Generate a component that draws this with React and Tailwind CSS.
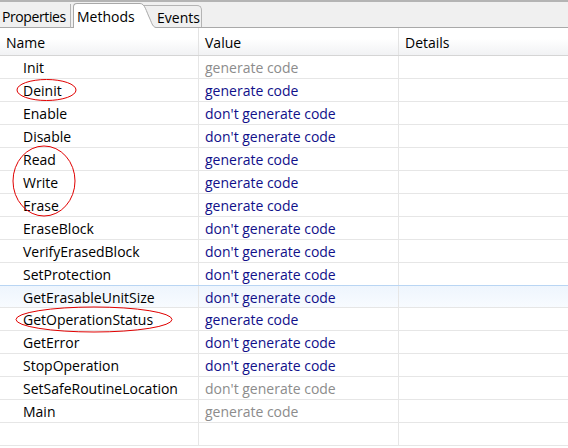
import React from 'react';

const rows = [
  { name: 'Init', value: 'generate code', dim: true },
  { name: 'Deinit', value: 'generate code' },
  { name: 'Enable', value: "don't generate code" },
  { name: 'Disable', value: "don't generate code" },
  { name: 'Read', value: 'generate code' },
  { name: 'Write', value: 'generate code' },
  { name: 'Erase', value: 'generate code' },
  { name: 'EraseBlock', value: "don't generate code" },
  { name: 'VerifyErasedBlock', value: "don't generate code" },
  { name: 'SetProtection', value: "don't generate code" },
  { name: 'GetErasableUnitSize', value: "don't generate code", active: true },
  { name: 'GetOperationStatus', value: 'generate code' },
  { name: 'GetError', value: "don't generate code" },
  { name: 'StopOperation', value: "don't generate code" },
  { name: 'SetSafeRoutineLocation', value: "don't generate code", dim: true },
  { name: 'Main', value: 'generate code', dim: true },
  { name: '', value: '' },
];

const Row = ({ name, value, dim, active }) => (
  <div
    className={
      'flex h-[23px] border-b ' +
      (active
        ? 'border-t border-t-[#b9d5f3] border-b-[#e6e6e6] bg-gradient-to-b from-[#eef5fd] to-[#f8fbff] -mt-px'
        : 'border-[#e6e6e6]')
    }
  >
    <div className="w-[199px] shrink-0 border-r border-[#e6e6e6] pl-[23px] pt-[2px] flex items-center text-black">
      {name}
    </div>
    <div
      className={
        'w-[200px] shrink-0 border-r border-[#e6e6e6] pl-[6px] pt-[2px] flex items-center ' +
        (dim ? 'text-[#8c8c8c]' : 'text-[#10108a]')
      }
    >
      {value}
    </div>
    <div className="flex-1" />
  </div>
);

export default function App() {
  return (
    <div className="relative w-[568px] h-[448px] overflow-hidden bg-white font-['Open_Sans',sans-serif] text-[14px] leading-none">
      {/* tab strip */}
      <div className="h-[28px] bg-[#f0f0f0] border-t-2 border-[#b4b4b4] flex items-end relative">
        <div className="absolute left-0 right-0 bottom-0 h-px bg-[#a9a9a9]" />
        <div className="h-[24px] w-[71px] border-r border-[#b4b4b4] pl-[2px] pt-[2px] flex items-center text-black relative tracking-[-0.4px]">
          Properties
        </div>
        <div className="h-[25px] ml-[2px] flex relative z-10">
          <div className="w-[64px] bg-white border-l border-t border-[#a9a9a9] rounded-tl-[4px] pl-[3px] pt-[2px] flex items-center">
            Methods
          </div>
          <svg width="20" height="25" viewBox="0 0 20 25" className="-ml-px">
            <path d="M0 0.5 H4 C9 0.5 10 8 14 16 C16 21 17 24 20 24.5 V25 H0 Z" fill="#ffffff" />
            <path d="M0 0.5 H4 C9 0.5 10 8 14 16 C16 21 17 24 20 24.5" fill="none" stroke="#a9a9a9" />
          </svg>
        </div>
        <div className="h-[23px] -ml-[14px] w-[60px] pl-[15px] pt-[2px] border-r border-t border-[#b4b4b4] rounded-tr-[5px] flex items-center text-black">
          Events
        </div>
      </div>

      {/* header */}
      <div className="flex h-[28px] border-b border-[#d5d5d5] bg-gradient-to-b from-white from-40% to-[#f1f2f4]">
        <div className="w-[199px] shrink-0 border-r border-[#e3e3e3] pl-[6px] pt-[2px] flex items-center text-black">Name</div>
        <div className="w-[200px] shrink-0 border-r border-[#e3e3e3] pl-[6px] pt-[2px] flex items-center text-black">Value</div>
        <div className="flex-1 pl-[6px] pt-[2px] flex items-center text-black">Details</div>
      </div>

      {rows.map((r, i) => (
        <Row key={i} {...r} />
      ))}

      {/* red marks */}
      <svg className="absolute left-0 top-0 pointer-events-none" width="568" height="448">
        <ellipse cx="46.5" cy="90" rx="29.5" ry="10.5" fill="none" stroke="#e00000" strokeWidth="1" />
        <ellipse cx="44" cy="181" rx="31" ry="35" fill="none" stroke="#e00000" strokeWidth="1" />
        <ellipse cx="94" cy="319.5" rx="78" ry="12.5" fill="none" stroke="#e00000" strokeWidth="1" />
      </svg>
    </div>
  );
}
